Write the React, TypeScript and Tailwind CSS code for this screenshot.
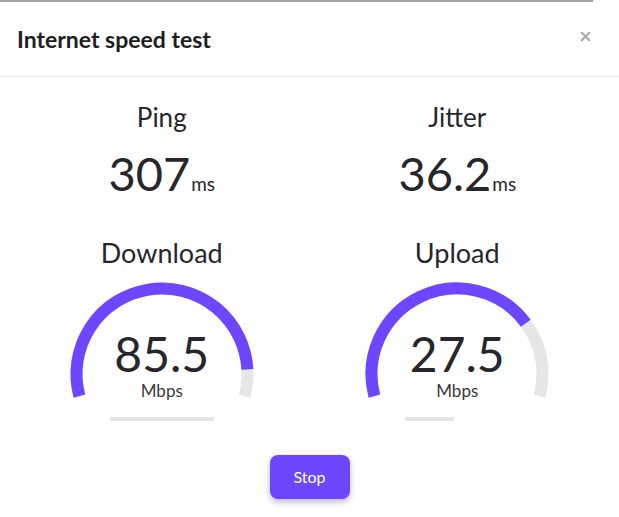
import { X } from 'lucide-react';

const PURPLE = '#6c47ff';

// gauge geometry: 210° sweep, starts 15° below the left horizontal
const CX = 95;
const CY = 95;
const R = 85.5;
const START = 195;
const SWEEP = 210;

function pt(angle: number) {
  const a = (angle * Math.PI) / 180;
  return `${(CX + R * Math.cos(a)).toFixed(2)} ${(CY - R * Math.sin(a)).toFixed(2)}`;
}

function arc(fraction: number) {
  const end = START - SWEEP * fraction;
  const large = SWEEP * fraction > 180 ? 1 : 0;
  return `M ${pt(START)} A ${R} ${R} 0 ${large} 1 ${pt(end)}`;
}

function Gauge({ value, fraction, bar }: { value: string; fraction: number; bar: number }) {
  return (
    <>
      <div className="relative mt-[10px] h-[130px] w-[190px]">
        <svg width="190" height="130" viewBox="0 0 190 130">
          <path d={arc(1)} fill="none" stroke="#e6e6e6" strokeWidth="12" />
          <path d={arc(fraction)} fill="none" stroke={PURPLE} strokeWidth="12" />
        </svg>
        <div className="absolute left-0 right-0 top-[52px] text-center text-[48px] leading-[46px] text-[#26262b]">
          {value}
        </div>
        <div className="absolute left-0 right-0 top-[103px] text-center text-[17px] leading-[18px] text-[#3a3a40]">
          Mbps
        </div>
      </div>
      <div className="mt-[8px] h-[4px] w-[104px]">
        <div className="h-full bg-[#e6e6e6]" style={{ width: `${bar}%` }} />
      </div>
    </>
  );
}

function Stat({ label, value }: { label: string; value: string }) {
  return (
    <>
      <div className="mt-[25px] text-[26px] leading-[30px] text-[#26262b]">{label}</div>
      <div className="mt-[15px] flex h-[52px] items-baseline text-[#26262b]">
        <span className="text-[47px] leading-[52px]">{value}</span>
        <span className="ml-[1px] text-[19px] leading-none">ms</span>
      </div>
    </>
  );
}

export default function App() {
  return (
    <div className="relative h-[517px] w-[619px] overflow-hidden bg-white font-['Lato',sans-serif]">
      {/* edge of the page behind the dialog */}
      <div className="mr-[26px] h-[2px] bg-[#a3a3a3]" />

      {/* Header */}
      <div className="flex h-[75px] items-center justify-between border-b border-[#ececec] pl-[17px] pr-[26px]">
        <h1 className="text-[23px] font-bold leading-[28px] text-[#1e1e24]">Internet speed test</h1>
        <X className="-mt-[6px] h-[15px] w-[15px] text-[#ababab]" strokeWidth={3.5} />
      </div>

      {/* Results */}
      <div className="grid grid-cols-2 px-[14px]">
        <div className="flex flex-col items-center">
          <Stat label="Ping" value="307" />
          <div className="mt-[38px] text-[27px] leading-[32px] text-[#26262b]">Download</div>
          <Gauge value="85.5" fraction={0.914} bar={100} />
        </div>
        <div className="flex flex-col items-center">
          <Stat label="Jitter" value="36.2" />
          <div className="mt-[38px] text-[27px] leading-[32px] text-[#26262b]">Upload</div>
          <Gauge value="27.5" fraction={0.755} bar={47} />
        </div>
      </div>

      <div className="mt-[34px] flex justify-center">
        <button className="h-[44px] w-[80px] rounded-[8px] bg-[#6c47ff] text-[16px] text-white shadow-[0_3px_6px_rgba(40,20,120,0.3)]">
          Stop
        </button>
      </div>
    </div>
  );
}
